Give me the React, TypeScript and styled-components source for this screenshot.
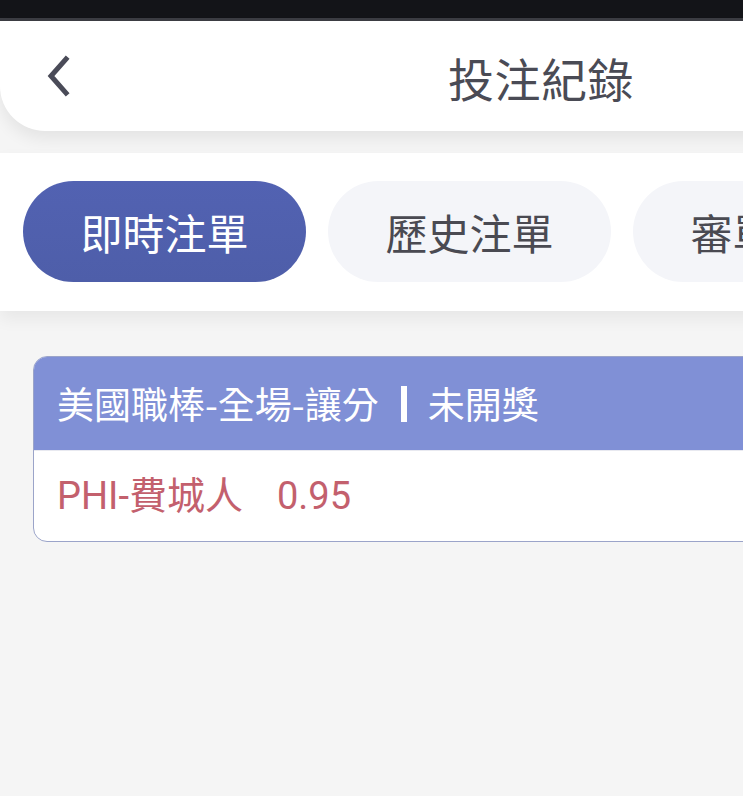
import React from "react";
import styled, { createGlobalStyle } from "styled-components";

const GlobalStyle = createGlobalStyle`
  html, body {
    margin: 0;
    padding: 0;
    width: 743px;
    height: 796px;
    overflow: hidden;
    background: #f5f5f5;
    font-family: "Noto Sans CJK TC", "Noto Sans", sans-serif;
  }
`;

const Screen = styled.div`
  width: 1082px;
  min-height: 796px;
  background: #f5f5f5;
  display: flex;
  flex-direction: column;
`;

const StatusBar = styled.div`
  height: 18px;
  background: #131418;
  border-bottom: 3px solid #3c3d43;
`;

const Header = styled.header`
  position: relative;
  z-index: 2;
  height: 110px;
  background: #ffffff;
  border-bottom-left-radius: 45px;
  box-shadow: 0 8px 16px rgba(0, 0, 0, 0.07);
  display: flex;
  align-items: center;
  justify-content: center;
`;

const BackButton = styled.button`
  position: absolute;
  left: 38px;
  top: 32px;
  width: 42px;
  height: 46px;
  border: none;
  background: transparent;
  padding: 0;
  display: flex;
  align-items: center;
  justify-content: center;
`;

const Title = styled.h1`
  margin: 0;
  font-family: "Noto Sans CJK TC", sans-serif;
  font-size: 46px;
  font-weight: 400;
  color: #4a4b55;
  letter-spacing: 0.5px;
  line-height: 1;
  padding-top: 2px;
`;

const TabBar = styled.nav`
  position: relative;
  z-index: 1;
  margin-top: 22px;
  height: 158px;
  box-sizing: border-box;
  background: #ffffff;
  box-shadow: 0 8px 16px rgba(0, 0, 0, 0.06);
  display: flex;
  gap: 22px;
  padding: 28px 23px 0;
`;

const Tab = styled.button<{ $active?: boolean }>`
  width: 283px;
  height: 101px;
  border: none;
  border-radius: 51px;
  background: ${(p) =>
    p.$active ? "linear-gradient(180deg, #5262b2 0%, #4e5ea9 100%)" : "#f4f5f9"};
  color: ${(p) => (p.$active ? "#ffffff" : "#4a4a52")};
  font-family: "Noto Sans CJK TC", "Noto Sans", sans-serif;
  font-size: 42px;
  font-weight: 400;
  display: flex;
  align-items: center;
  justify-content: center;
  padding: 0;
  flex-shrink: 0;
`;

const Content = styled.main`
  padding: 45px 33px 0;
`;

const Card = styled.section`
  border: 1.5px solid #9ba4c9;
  border-radius: 14px;
  overflow: hidden;
  background: #ffffff;
`;

const CardHead = styled.div`
  height: 93px;
  background: #8090d6;
  color: #ffffff;
  font-size: 37px;
  display: flex;
  align-items: center;
  padding-left: 23px;
  line-height: 1;
`;

const Divider = styled.span`
  display: inline-block;
  width: 6px;
  height: 36px;
  background: #ffffff;
  margin: 0 21px 0 22px;
`;

const CardBody = styled.div`
  height: 91px;
  color: #c3606d;
  font-family: Roboto, "Noto Sans CJK TC", sans-serif;
  font-size: 38px;
  display: flex;
  align-items: center;
  padding-left: 23px;
  line-height: 1;
  border-top: 1px solid #e8e9f0;
  box-sizing: border-box;
`;

const Odds = styled.span`
  margin-left: 34px;
`;

export default function App() {
  return (
    <>
      <GlobalStyle />
      <Screen>
        <StatusBar />
        <Header>
          <BackButton aria-label="返回">
            <svg width="34" height="42" viewBox="0 0 34 42" fill="none">
              <path
                d="M24 4 L9 21 L24 38"
                stroke="#4a4b58"
                strokeWidth="5"
                strokeLinecap="square"
                strokeLinejoin="miter"
              />
            </svg>
          </BackButton>
          <Title>投注紀錄</Title>
        </Header>
        <TabBar>
          <Tab $active>即時注單</Tab>
          <Tab>歷史注單</Tab>
          <Tab>審單紀錄</Tab>
        </TabBar>
        <Content>
          <Card>
            <CardHead>
              美國職棒-全場-讓分
              <Divider />
              未開獎
            </CardHead>
            <CardBody>
              PHI-費城人
              <Odds>0.95</Odds>
            </CardBody>
          </Card>
        </Content>
      </Screen>
    </>
  );
}
